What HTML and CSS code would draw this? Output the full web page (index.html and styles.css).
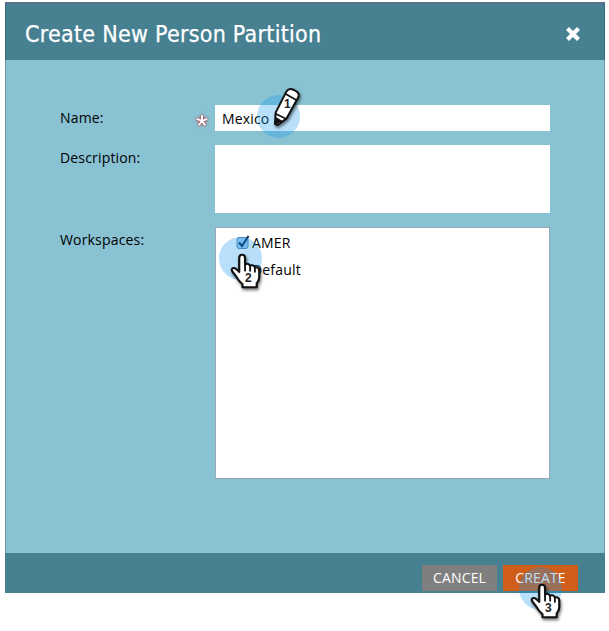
FILE: index.html
```html
<!DOCTYPE html>
<html lang="en">
<head>
<meta charset="utf-8">
<title>Create New Person Partition</title>
<link rel="stylesheet" href="styles.css">
</head>
<body>
<svg class="defs" width="0" height="0" aria-hidden="true">
  <symbol id="hand" viewBox="0 0 96 120" preserveAspectRatio="none">
    <path d="M28 58 V18 Q28 8 36 8 Q44 8 44 18 V38 Q53 32 58 41 Q67 37 71 46 Q82 44 83 55 V76 Q82 88 76 94 V106 H37 V97 Q27 88 20 74 L9 58 Q5 50 12 48 Q18 47 28 60 Z" fill="#fff" stroke="#111" stroke-width="6" stroke-linejoin="round"/>
    <path d="M44 37 V56 M58 41 V57 M71 46 V60" fill="none" stroke="#111" stroke-width="5" stroke-linecap="round"/>
  </symbol>
</svg>
<div class="dialog">
  <header class="header">
    <h1 class="title">Create New Person Partition</h1>
    <svg class="close" viewBox="0 0 14 14"><path d="M2.2 2.2 11.8 11.8M11.8 2.2 2.2 11.8" stroke="#fff" stroke-width="3.7"/></svg>
  </header>
  <main class="form">
    <div class="row">
      <label class="label">Name:</label>
      <svg class="required" viewBox="0 0 20 20"><path d="M10 11V4M10 11 3.5 8.5M10 11 16.5 8.5M10 11 6 16.5M10 11 14 16.5" stroke="#fff" stroke-width="2.4"/></svg>
      <div class="field name">Mexico</div>
    </div>
    <div class="row">
      <label class="label">Description:</label>
      <div class="field description"></div>
    </div>
    <div class="row">
      <label class="label">Workspaces:</label>
      <div class="field workspaces">
        <div class="option"><svg class="checkbox" viewBox="0 0 14 16"><rect x="1" y="3.5" width="11" height="11" rx="2" fill="#9fcdf1" stroke="#6282a5"/><path d="M3 8.5 6 12 12.5 2" fill="none" stroke="#102f58" stroke-width="2.2"/></svg>AMER</div>
        <div class="option second">Default</div>
      </div>
    </div>
  </main>
  <footer class="footer">
    <div class="button">CANCEL</div>
    <div class="button primary">CREATE</div>
  </footer>
</div>
<div class="marker one">
  <svg class="pencil" viewBox="0 0 96 126"><path d="M18 114 20 80 52 17 Q60 4 75 12 L82 16 Q94 23 87 35 L53 97 26 117 Z" fill="#fff" stroke="#111" stroke-width="6" stroke-linejoin="round"/><path d="M49 23 83 43 M20 83 52 99" stroke="#111" stroke-width="5"/><path d="M20 93 18 117 41 105 Z" fill="#111"/></svg>
  <span class="number">1</span>
</div>
<div class="marker two"><svg class="hand"><use href="#hand"/></svg><span class="number">2</span></div>
<div class="marker three"><svg class="hand"><use href="#hand"/></svg><span class="number">3</span></div>
</body>
</html>
```
FILE: styles.css
```css
* { box-sizing: border-box; }
body {
  position: relative;
  width: 609px;
  height: 631px;
  margin: 0;
  padding: 2px 4px 0 5px;
  overflow: hidden;
  background: #fff;
  color: #000;
  font: 14px/20px "Open Sans", "Noto Sans", sans-serif;
  letter-spacing: .17px;
}
.defs { position: absolute; }
.dialog {
  display: flex;
  flex-direction: column;
  height: 591px;
  background: #89c2d3;
  border-left: 1px solid #6a9eb0;
  border-right: 1px solid #6a9eb0;
}
.header {
  display: flex;
  align-items: center;
  justify-content: space-between;
  flex: 0 0 58px;
  margin: 0 -1px;
  padding: 2px 23px 0 19px;
  background: #468091;
  border: 1px solid #376c80;
  border-top: 2px solid #5a6f8c;
  border-bottom: 0;
}
.title {
  margin: 2px 0 0;
  color: #fff;
  font: 400 23px/32px "DejaVu Sans Condensed", "DejaVu Sans", sans-serif;
  font-stretch: condensed;
  letter-spacing: .27px;
  -webkit-text-stroke: .25px #fff;
  white-space: nowrap;
}
.close { width: 16px; height: 16px; margin-top: 2px; }
.form {
  display: flex;
  flex: 1;
  flex-direction: column;
  padding: 45px 54px 0;
}
.row { display: flex; align-items: flex-start; margin-bottom: 14px; }
.label { width: 136px; padding-top: 3px; }
.required {
  width: 16px;
  height: 16px;
  margin: 7px 5px 0 -2px;
  filter: drop-shadow(0 0 1px #b93232) drop-shadow(0 0 1px rgba(185, 50, 50, .5));
}
.label + .field { margin-left: 19px; }
.field { width: 335px; background: #fff; }
.name { height: 26px; padding: 4px 7px; }
.description { height: 68px; }
.workspaces { height: 252px; padding: 5px 20px; border: 1px solid #9aa9b8; }
.option { display: flex; align-items: center; height: 20px; }
.checkbox { width: 14px; height: 16px; margin: -3px 2px 0 0; }
.second { margin-top: 7px; padding-left: 16px; }
.footer {
  display: flex;
  flex: 0 0 40px;
  align-items: flex-start;
  justify-content: flex-end;
  gap: 6px;
  margin: 0 -1px;
  padding: 12px 27px 0;
  background: #468091;
}
.button {
  width: 75px;
  height: 26px;
  background: #7f7f7f;
  color: #fff;
  line-height: 26px;
  text-align: center;
}
.primary { background: #d05d19; }
.marker {
  position: absolute;
  width: 43px;
  height: 43px;
  border-radius: 50%;
  background: rgba(22, 152, 238, .3);
}
.one { left: 257px; top: 95px; }
.two { left: 219px; top: 237px; }
.three { left: 519px; top: 567px; }
.hand, .pencil {
  position: absolute;
  overflow: visible;
  filter: drop-shadow(1px 2px 1.5px rgba(0, 0, 0, .55));
}
.hand { left: 10px; top: 15px; width: 35px; height: 40px; }
.pencil { left: 12px; top: -9px; width: 32px; height: 42px; }
.number {
  position: absolute;
  left: 26px;
  top: 34px;
  color: #222;
  font: 700 12px/14px "Liberation Sans", sans-serif;
}
.one .number { left: 27px; top: 2px; }
```
